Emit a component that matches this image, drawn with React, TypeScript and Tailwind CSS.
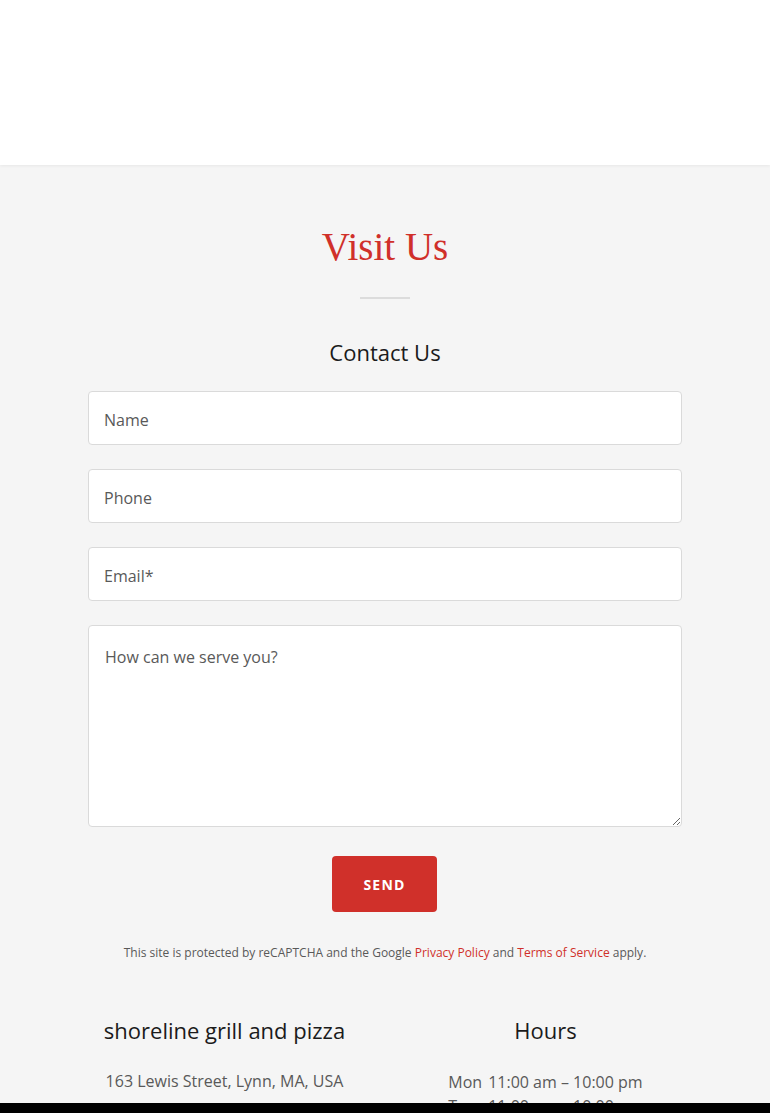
import React from "react";

const font = { fontFamily: "'Open Sans', 'Liberation Sans', sans-serif" };

export default function App() {
  return (
    <div style={font} className="min-h-[1113px] bg-[#f5f5f5]">
      <div className="h-[165px] bg-white shadow-[0_1px_3px_rgba(0,0,0,0.06)] relative z-10" />
      <section className="flex flex-col items-center pt-[57px]">
        <h1
          style={{ fontFamily: "'Liberation Serif', 'DejaVu Serif', serif" }}
          className="text-[39px] leading-[50px] text-[#d0302a]"
        >
          Visit Us
        </h1>
        <div className="mt-[25px] h-[2px] w-[50px] bg-[#dcdcdc]" />
        <h2 className="mt-[38px] text-[22px] leading-[30px] text-[#1b1b1b]">Contact Us</h2>
        <form className="mt-[24px] w-[594px] flex flex-col gap-[24px]">
          {["Name", "Phone", "Email*"].map((p) => (
            <input
              key={p}
              placeholder={p}
              className="h-[54px] w-full rounded-[4px] border border-[#dadada] bg-white px-[15px] pt-[4px] text-[16px] text-[#1b1b1b] placeholder:text-[#595959] outline-none"
              style={font}
            />
          ))}
          <textarea
            placeholder="How can we serve you?"
            className="h-[202px] w-full rounded-[4px] border border-[#dadada] bg-white px-[16px] pt-[19px] text-[16px] leading-[24px] text-[#1b1b1b] placeholder:text-[#595959] outline-none"
            style={font}
          />
          <div className="flex justify-center pt-[5px] pr-[1px]">
            <button
              type="button"
              className="h-[56px] w-[105px] rounded-[4px] bg-[#d0302a] text-[14px] font-bold tracking-[1.2px] text-white"
              style={font}
            >
              SEND
            </button>
          </div>
        </form>
        <p className="mt-[32px] text-[12px] leading-[18px] text-[#595959]">
          This site is protected by reCAPTCHA and the Google{" "}
          <span className="text-[#d0302a]">Privacy Policy</span> and{" "}
          <span className="text-[#d0302a]">Terms of Service</span> apply.
        </p>
        <div className="mt-[53px] grid w-[642px] grid-cols-2">
          <div className="flex flex-col items-center">
            <h3 className="text-[22px] leading-[30px] text-[#1b1b1b]">shoreline grill and pizza</h3>
            <p className="mt-[24px] text-[16px] leading-[24px] text-[#595959]">
              163 Lewis Street, Lynn, MA, USA
            </p>
          </div>
          <div className="flex flex-col items-center">
            <h3 className="text-[22px] leading-[30px] text-[#1b1b1b]">Hours</h3>
            <table className="mt-[25px] text-[16px] leading-[24px] text-[#595959]">
              <tbody>
                {["Mon", "Tue", "Wed", "Thu", "Fri", "Sat", "Sun"].map((d) => (
                  <tr key={d}>
                    <td className="pr-[6px]">{d}</td>
                    <td>11:00 am – 10:00 pm</td>
                  </tr>
                ))}
              </tbody>
            </table>
          </div>
        </div>
        <div className="h-[80px]" />
      </section>
      <div className="fixed bottom-0 left-0 right-0 h-[10px] bg-black" />
    </div>
  );
}
